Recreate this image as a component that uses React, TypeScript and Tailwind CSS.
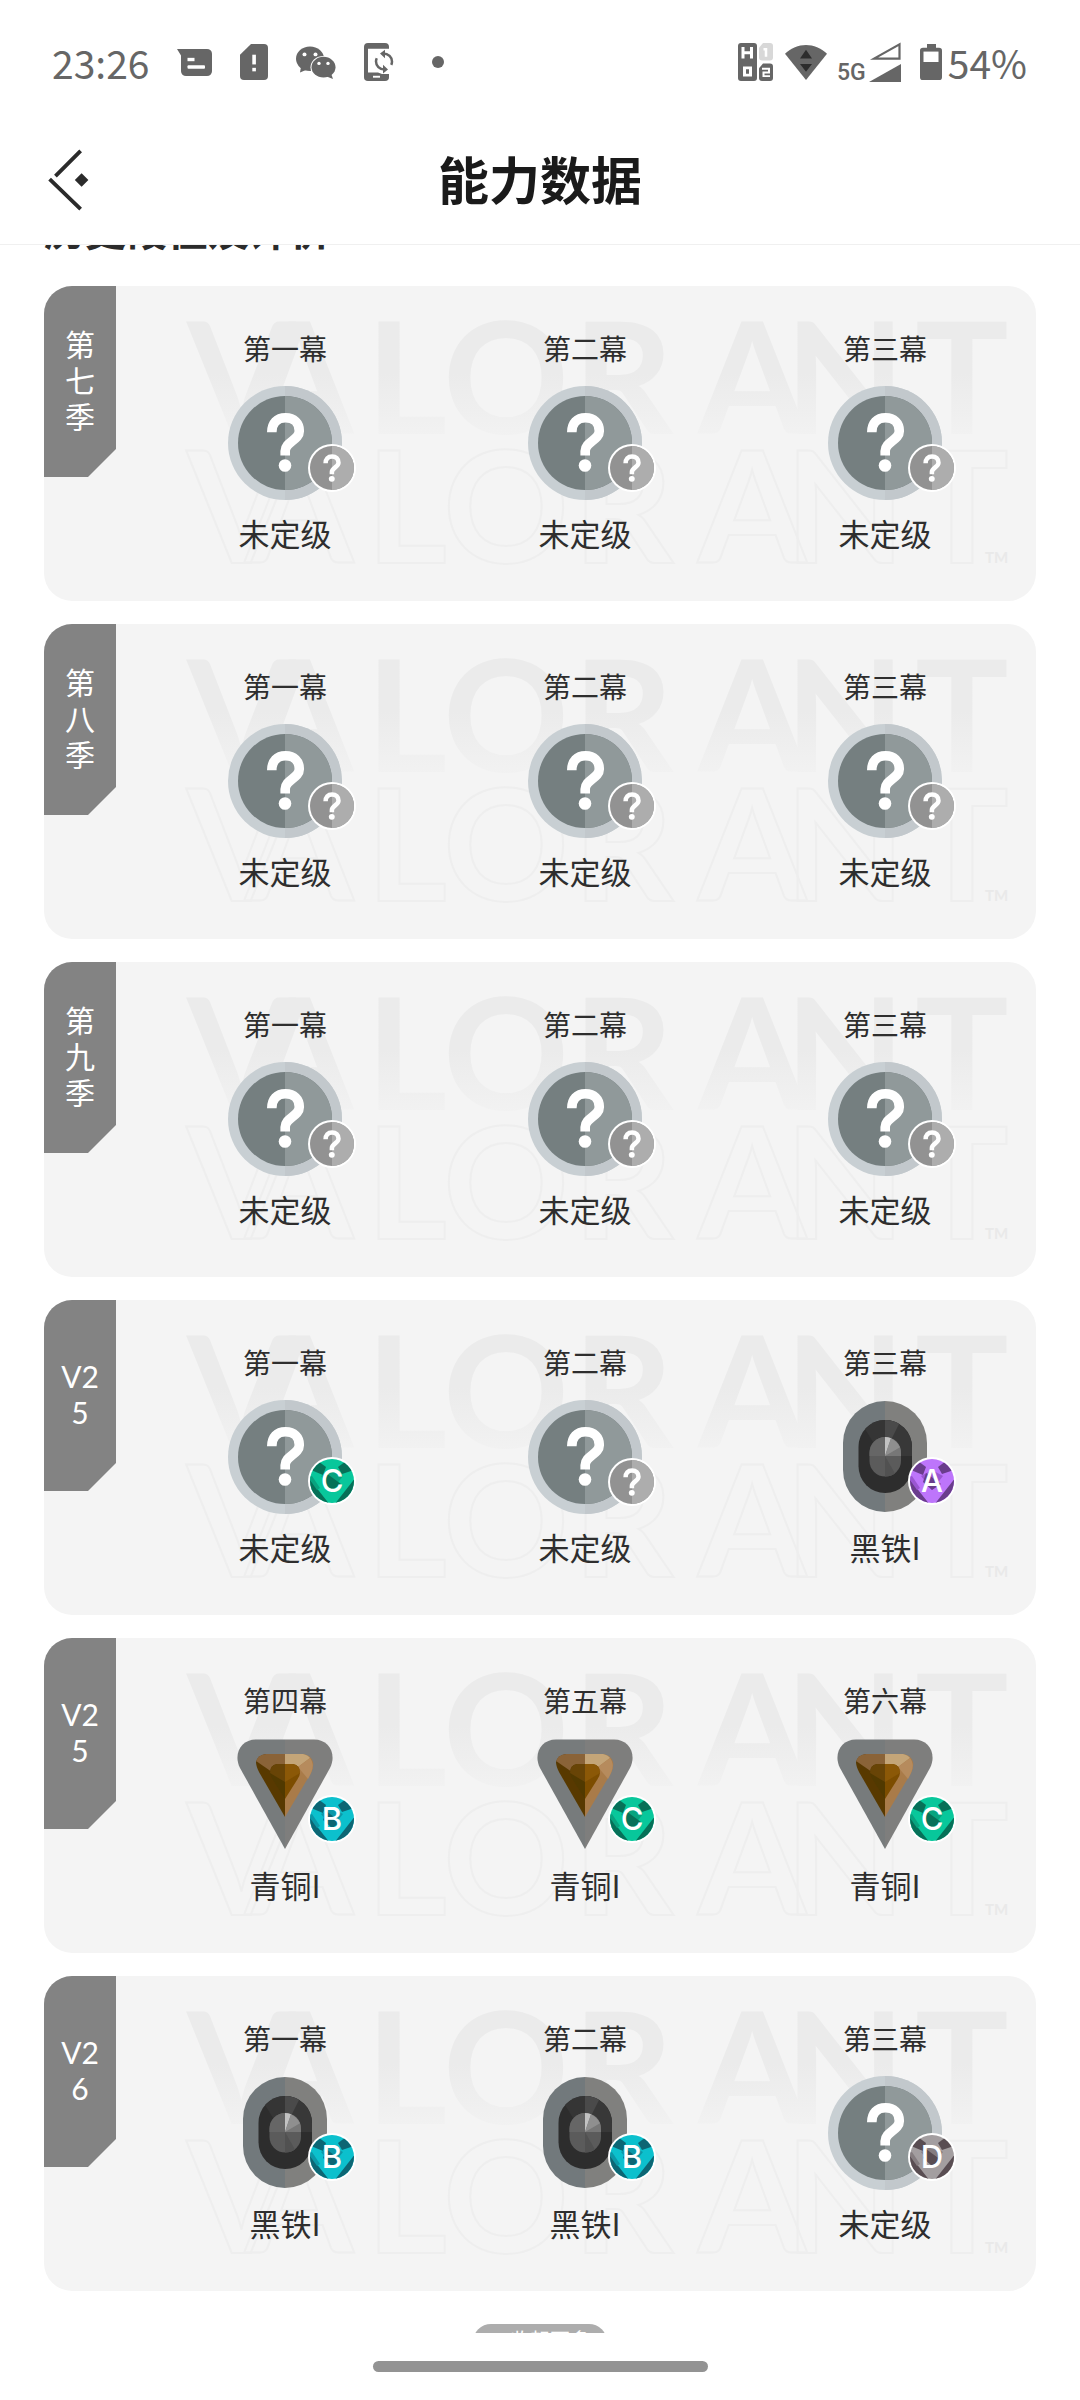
import { ChevronUp } from 'lucide-react';

type Grade = '?' | 'A' | 'B' | 'C' | 'D';
type Tier = 'unranked' | 'iron' | 'bronze';

interface Act {
  name: string;
  tier: Tier;
  grade: Grade;
}

interface Season {
  lines: string[];
  acts: Act[];
}

const TIER_LABEL: Record<Tier, string> = {
  unranked: '未定级',
  iron: '黑铁I',
  bronze: '青铜I',
};

const GRADE_COLORS: Record<Exclude<Grade, '?'>, { base: string; dark: string; mid: string }> = {
  A: { base: '#bd75fb', dark: '#6a3d8c', mid: '#9a56d2' },
  B: { base: '#0cc0cd', dark: '#0d6674', mid: '#0b98a8' },
  C: { base: '#08c79b', dark: '#077058', mid: '#08a37f' },
  D: { base: '#a39ea0', dark: '#594d52', mid: '#857d80' },
};

const unrankedActs: Act[] = [
  { name: '第一幕', tier: 'unranked', grade: '?' },
  { name: '第二幕', tier: 'unranked', grade: '?' },
  { name: '第三幕', tier: 'unranked', grade: '?' },
];

const seasons: Season[] = [
  { lines: ['第', '七', '季'], acts: unrankedActs },
  { lines: ['第', '八', '季'], acts: unrankedActs },
  { lines: ['第', '九', '季'], acts: unrankedActs },
  {
    lines: ['V2', '5'],
    acts: [
      { name: '第一幕', tier: 'unranked', grade: 'C' },
      { name: '第二幕', tier: 'unranked', grade: '?' },
      { name: '第三幕', tier: 'iron', grade: 'A' },
    ],
  },
  {
    lines: ['V2', '5'],
    acts: [
      { name: '第四幕', tier: 'bronze', grade: 'B' },
      { name: '第五幕', tier: 'bronze', grade: 'C' },
      { name: '第六幕', tier: 'bronze', grade: 'C' },
    ],
  },
  {
    lines: ['V2', '6'],
    acts: [
      { name: '第一幕', tier: 'iron', grade: 'B' },
      { name: '第二幕', tier: 'iron', grade: 'B' },
      { name: '第三幕', tier: 'unranked', grade: 'D' },
    ],
  },
];

function StatusBar() {
  return (
    <div className="flex h-[116px] shrink-0 items-center justify-between pt-2 pl-[52px] pr-[53px] text-[39px] leading-none text-[#666]">
      <div className="flex items-center gap-7">
        <span>23:26</span>
        <svg className="h-[27px] w-[35px]" viewBox="0 0 35 29" preserveAspectRatio="none" fill="#666">
          <path d="M0 0H30a5 5 0 0 1 5 5V24a5 5 0 0 1-5 5H9a5 5 0 0 1-5-5V7Z" />
          <rect x="10.500" y="9.500" width="7" height="3.600" fill="#fff" />
          <rect x="10.500" y="17.500" width="17.500" height="3.600" rx="1" fill="#fff" />
        </svg>
        <svg className="h-9 w-7" viewBox="0 0 28 37" preserveAspectRatio="none" fill="#666">
          <path d="M11 0H24a4 4 0 0 1 4 4V33a4 4 0 0 1-4 4H4a4 4 0 0 1-4-4V11Z" />
          <rect x="12.300" y="11" width="3.600" height="10" fill="#fff" />
          <rect x="12.300" y="24.500" width="3.600" height="3.600" fill="#fff" />
        </svg>
        <svg className="h-[33px] w-10" viewBox="0 0 40 35" preserveAspectRatio="none" fill="#666">
          <path d="M5 22 4 28l7-3Z" />
          <ellipse cx="14" cy="13.500" rx="14" ry="13" />
          <circle cx="8.500" cy="9" r="2" fill="#fff" />
          <circle cx="19.500" cy="9" r="2" fill="#fff" />
          <ellipse cx="27.500" cy="22.500" rx="13" ry="12" fill="#fff" />
          <ellipse cx="27.500" cy="22.500" rx="12" ry="11" />
          <path d="m30 32 7 3-2-6Z" />
          <circle cx="23" cy="18.500" r="1.700" fill="#fff" />
          <circle cx="32" cy="18.500" r="1.700" fill="#fff" />
        </svg>
        <svg className="h-[38px] w-[30px]" viewBox="0 0 30 40" preserveAspectRatio="none" fill="none" stroke="#666">
          <path
            d="M4 0H21a4 4 0 0 1 4 4V6H4V31h10l4 1.500h7V36a4 4 0 0 1-4 4H4a4 4 0 0 1-4-4V4a4 4 0 0 1 4-4Z"
            fill="#666"
            stroke="none"
          />
          <path d="M9 35.500h7" stroke="#fff" strokeWidth="2" />
          <path d="M19 11c5.500 0 9 4 9 8.500 0 1.500-.3 2.500-.8 3.500M20.500 28c-5 0-8.500-4-8.500-8.500 0-1.500.3-2.500.8-3.500" strokeWidth="2.500" />
          <path d="m21 7-5 4 5 5ZM19 23l5 5-5 4Z" fill="#666" stroke="none" />
        </svg>
        <span className="ml-[10px] size-3 rounded-full bg-[#666]" />
      </div>

      <div className="flex items-center">
        <svg className="mr-3 h-[38px] w-[35px]" viewBox="0 0 35 39" preserveAspectRatio="none">
          <rect width="19" height="39" rx="3" fill="#666" />
          <path d="M5 4v12M13.500 4v12M5 10h8.500" stroke="#fff" strokeWidth="3" />
          <path d="M6.500 25.500h6V33h-6Z" stroke="#fff" strokeWidth="3" fill="none" />
          <path d="M25 0h7a3 3 0 0 1 3 3v12a3 3 0 0 1-3 3h-8a3 3 0 0 1-3-3V5Z" fill="#d8d8d8" />
          <path d="M25.500 6.500H28V14" stroke="#fff" strokeWidth="2.500" fill="none" />
          <path d="M25 21h7a3 3 0 0 1 3 3v12a3 3 0 0 1-3 3h-8a3 3 0 0 1-3-3V26Z" fill="#666" />
          <path d="M24 26.500h7v3.800h-5.500V34H32" stroke="#fff" strokeWidth="2" fill="none" />
        </svg>
        <svg className="mr-[10px] h-[35px] w-[42px]" viewBox="0 0 42 36" preserveAspectRatio="none">
          <path d="M0 9C12-3 30-3 42 9L21 36Z" fill="#666" />
          <path d="m21 5 6 9H15ZM15 19.500h12l-6 8Z" fill="#2c2c2c" />
        </svg>
        <span className="mr-[3px] pt-[21px] font-[Roboto,sans-serif] text-[23px] leading-none font-medium">5G</span>
        <svg className="mr-[19px] h-10 w-8" viewBox="0 0 32 42" preserveAspectRatio="none">
          <path d="M5 17.500 30.500 2.500v15Z" fill="none" stroke="#666" strokeWidth="2.200" />
          <path d="M0 42 32 23v19Z" fill="#666" />
        </svg>
        <svg className="mr-[6px] h-9 w-[22px]" viewBox="0 0 22 38" preserveAspectRatio="none">
          <path d="M7 0h9v4h3a3 3 0 0 1 3 3v28a3 3 0 0 1-3 3H3a3 3 0 0 1-3-3V7a3 3 0 0 1 3-3h4Z" fill="#666" />
          <rect x="3.500" y="8" width="15" height="11" fill="#fff" />
        </svg>
        <span>54%</span>
      </div>
    </div>
  );
}

function Header() {
  return (
    <header className="relative flex h-[129px] shrink-0 items-center justify-center border-b border-[#f0f0f0]">
      <button aria-label="返回" className="absolute left-12">
        <svg className="h-[62px] w-[42px]" viewBox="0 0 42 64" fill="none" stroke="#2b2b2b" strokeWidth="4">
          <path d="M33 2 7 28M1 31l32 31" />
          <path d="m34 25 7 7-7 7-7-7Z" fill="#2b2b2b" stroke="none" />
        </svg>
      </button>
      <h1 className="pb-1 text-[51px] leading-none font-bold text-[#1a1a1a]">能力数据</h1>
    </header>
  );
}

function QuestionMark() {
  return (
    <>
      <path
        d="M43.800 46.300C43.800 37 49 31.800 57.500 31.800S71.300 37 71.300 45C71.300 54 57.200 56 57.200 65V69.500"
        fill="none"
        stroke="#fff"
        strokeWidth="9.600"
      />
      <circle cx="57" cy="79.500" r="6.300" fill="#fff" />
    </>
  );
}

function UnrankedIcon() {
  return (
    <svg className="size-full" viewBox="0 0 114 114">
      <circle cx="57" cy="57" r="57" fill="#c8cfd3" />
      <path d="M57 0a57 57 0 0 1 0 114Z" fill="#c2c8cc" />
      <circle cx="57" cy="57" r="47" fill="#757f80" />
      <path d="M57 10a47 47 0 0 1 0 94Z" fill="#90999a" />
      <QuestionMark />
    </svg>
  );
}

function IronIcon() {
  return (
    <svg className="size-full" viewBox="0 0 114 114">
      <path d="M57 1a42 42 0 0 0-42 42V70a42 42 0 0 0 42 42Z" fill="#72797c" />
      <path d="M57 1a42 42 0 0 1 42 42V70a42 42 0 0 1-42 42Z" fill="#80807e" />
      <rect x="30.500" y="20" width="53.500" height="73" rx="26.700" fill="#2d2d2d" />
      <path d="M57 20a27 27 0 0 1 27 27V56H57Z" fill="#383838" />
      <path d="M57 20q8 0 14 4L63 40l-6-3Z" fill="#4a4a4a" />
      <path d="M57 20a27 27 0 0 0-20 9l8 13 12-5Z" fill="#353535" />
      <rect x="41.500" y="37" width="31.500" height="39.500" rx="15.700" fill="#5b5b5b" />
      <path d="M41.500 56V53A15.700 16 0 0 1 57 37V56Z" fill="#666" />
      <path d="M57 56V37a15.700 15.700 0 0 1 16 16v3Z" fill="#777" />
      <path d="M57 56V37q3 0 6 1.200Z" fill="#c2c2c2" />
      <path d="M57 56 63 38.200q6 3 9 9Z" fill="#8f8f8f" />
      <path d="M57 56v20.500q6 0 10-3Z" fill="#515151" />
    </svg>
  );
}

function BronzeIcon() {
  return (
    <svg className="size-full" viewBox="0 0 114 114">
      <path d="M57 1.500H28C13 1.500 5 16 12 30L57 111Z" fill="#777b7c" />
      <path d="M57 1.500H86C101 1.500 109 16 102 30L57 111Z" fill="#7e7e7d" />
      <path d="M57 16H38Q30 17 28 24 28 28 31 34L57 79Z" fill="#583900" />
      <path d="M57 16H38Q30 17 28 23l16 11 13-8Z" fill="#8a6338" />
      <path d="M57 16H75Q83 17 85 24 86 29 83 35L57 79Z" fill="#a97b49" />
      <path d="M57 16H75Q80 17 82 20L70 29 57 26Z" fill="#c4a578" />
      <path d="m70 29 12-9q5 6 1 15l-3 6Z" fill="#b68b5d" />
      <path d="M57 26H49Q42 27 42 35q0 3 3 7L57 61Z" fill="#513900" />
      <path d="M57 26h8Q72 27 72 35q0 3-3 7L57 61Z" fill="#7d4d00" />
      <path d="m42 35 15 9V26H49Q42 27 42 35Z" fill="#684406" />
      <path d="m57 26 8 0q7 1 7 9L57 44Z" fill="#8b5807" />
    </svg>
  );
}

function GradeBadge({ grade }: { grade: Grade }) {
  if (grade === '?') {
    return (
      <svg className="absolute top-[58px] left-20 size-12" viewBox="0 0 48 48">
        <circle cx="24" cy="24" r="24" fill="#fff" />
        <circle cx="24" cy="24" r="22" fill="#929292" />
        <path d="M24 2a22 22 0 0 1 0 44Z" fill="#adadad" />
        <g transform="translate(-3 -2.500) scale(.47)">
          <QuestionMark />
        </g>
      </svg>
    );
  }

  const { base, dark, mid } = GRADE_COLORS[grade];
  const clipId = `grade-${grade}`;
  return (
    <svg className="absolute top-[57px] left-20 size-12" viewBox="0 0 48 48">
      <clipPath id={clipId}>
        <circle cx="24" cy="24" r="22" />
      </clipPath>
      <circle cx="24" cy="24" r="24" fill="#fff" />
      <g clipPath={`url(#${clipId})`}>
        <rect width="48" height="48" fill={base} />
        <path d="M10 4 18 10 15 18 3 13Z" fill={dark} />
        <path d="M38 4 30 10 34 17 46 13Z" fill={dark} />
        <path d="M13 19 24 13 35 19 24 33Z" fill={mid} />
        <path d="M18 16 33 27 24 33 15 25Z" fill={dark} />
        <path d="M0 20 22 48H0Z" fill={dark} />
        <path d="M48 20 26 48H48Z" fill={dark} />
        <path d="M0 20 4 19 12 31 9 33Z" fill={mid} />
      </g>
      <text x="24" y="35" textAnchor="middle" fill="#fff" className="font-[Inter,sans-serif] text-[31px] font-medium">
        {grade}
      </text>
    </svg>
  );
}

const TIER_ICON: Record<Tier, () => React.ReactElement> = {
  unranked: UnrankedIcon,
  iron: IronIcon,
  bronze: BronzeIcon,
};

// V and A interlock in the logo, so every letter has its own start
const WORDMARK_X = '143 201 322 399 529 654 741 871';

function Wordmark() {
  return (
    <svg
      aria-hidden="true"
      className="absolute inset-0 size-full font-[Lato,sans-serif] text-[156px] font-bold"
      viewBox="0 0 992 315"
    >
      <defs>
        <linearGradient id="wordmark-fade" x1="0" y1="0" x2="0" y2="1">
          <stop offset="0.500" stopColor="#ebebeb" />
          <stop offset="0.850" stopColor="#f2f2f2" />
        </linearGradient>
      </defs>
      <text x={WORDMARK_X} y="148" fill="url(#wordmark-fade)">VALORANT</text>
      <text x={WORDMARK_X} y="277" fill="none" stroke="#eeeeee" strokeWidth="2">VALORANT</text>
      <text x="941" y="277" fill="#e9e9e9" className="text-[15px]">TM</text>
    </svg>
  );
}

function ActColumn({ act }: { act: Act }) {
  const Icon = TIER_ICON[act.tier];
  return (
    <div className="flex flex-col items-center text-[#2e2e2e]">
      <h3 className="text-[28px] leading-9">{act.name}</h3>
      <div className="relative mt-5 size-[114px]">
        <Icon />
        <GradeBadge grade={act.grade} />
      </div>
      <p className="mt-[15px] text-[31px] leading-9">{TIER_LABEL[act.tier]}</p>
    </div>
  );
}

function SeasonCard({ season }: { season: Season }) {
  return (
    <section className="relative flex items-start overflow-hidden rounded-[28px] bg-[#f4f4f4]">
      <Wordmark />
      <h2 className="relative flex h-[191px] w-[72px] shrink-0 flex-col items-center justify-center bg-[#838383] pb-1 font-[Lato,'Noto_Sans_CJK_SC',sans-serif] text-[30px] leading-9 text-white [clip-path:polygon(0_0,100%_0,100%_163px,44px_100%,0_100%)]">
        {season.lines.map((line) => (
          <span key={line}>{line}</span>
        ))}
      </h2>
      <div className="relative ml-[19px] grid flex-1 grid-cols-3 pt-11 pr-px pb-[50px]">
        {season.acts.map((act) => (
          <ActColumn key={act.name} act={act} />
        ))}
      </div>
    </section>
  );
}

export default function App() {
  return (
    <div className="flex h-screen flex-col bg-white font-['Noto_Sans_CJK_SC',sans-serif]">
      <StatusBar />
      <Header />
      <main className="min-h-0 flex-1 overflow-hidden px-11">
        <h2 className="-mt-[37px] mb-[37px] text-[41px] leading-[41px] font-bold text-[#2b2b2b]">历史段位及评价</h2>
        <div className="flex flex-col gap-[23px]">
          {seasons.map((season, i) => (
            <SeasonCard key={i} season={season} />
          ))}
        </div>
        <button className="mx-auto mt-[33px] flex h-9 w-[134px] items-center justify-center gap-1 rounded-full bg-[#adadad] pb-1 text-[20px] leading-none text-white">
          <ChevronUp className="size-4" />
          收起更多
        </button>
      </main>
      <footer className="flex h-[67px] shrink-0 justify-center pt-7">
        <div className="h-[11px] w-[335px] rounded-full bg-[#939393]" />
      </footer>
    </div>
  );
}
